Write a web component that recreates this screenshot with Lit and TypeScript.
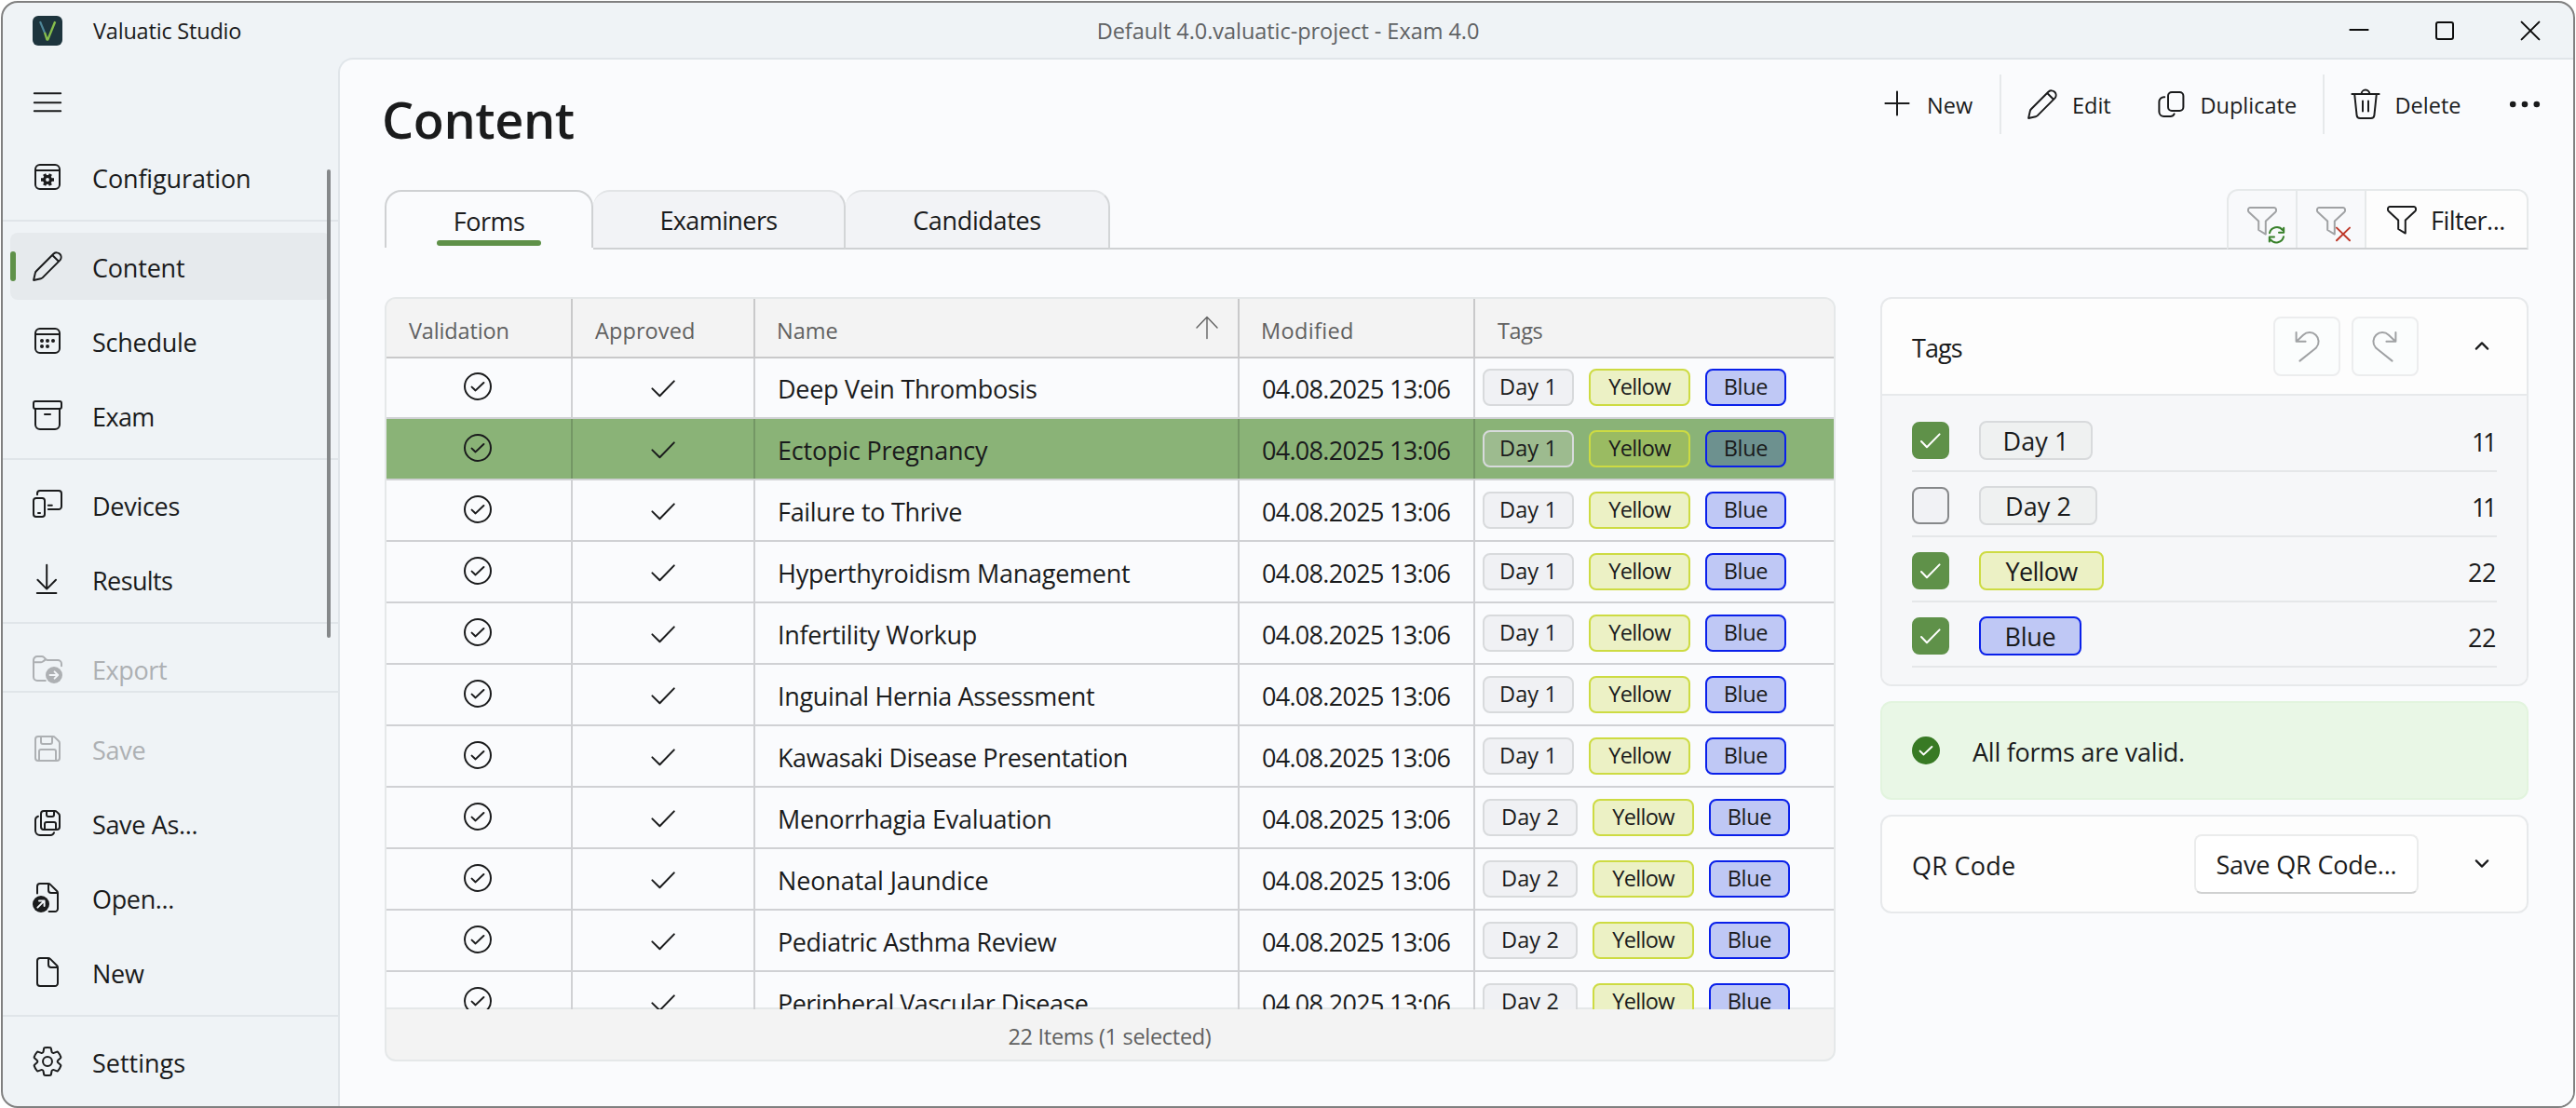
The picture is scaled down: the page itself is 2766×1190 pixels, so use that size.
import { LitElement, html, css, svg, nothing, TemplateResult, SVGTemplateResult } from "lit";
import { customElement, property } from "lit/decorators.js";
import { classMap } from "lit/directives/class-map.js";
import { styleMap } from "lit/directives/style-map.js";

/* Icons are drawn on a 20-unit grid, 2px per unit. */
const icons: Record<string, SVGTemplateResult> = {
  menu: svg`<path d="M2.9 5.15h14.2M2.9 10.1h14.2M2.9 14.6h14.2"/>`,
  configuration: svg`<rect x="3.5" y="3.5" width="13" height="13" rx="2.4"/><path d="M3.5 6.5h13"/>
    <circle cx="10" cy="11.5" r="1.75" stroke-width="1.6"/>
    <path d="M12.2 11.5h1.3M7.8 11.5H6.5M11.1 13.4l.6 1.1M8.9 13.4l-.6 1.1M11.1 9.6l.6-1.1M8.9 9.6l-.6-1.1" stroke-width="1.7" stroke-linecap="butt"/>`,
  pencil: svg`<path d="M13.3 3.25a2.45 2.45 0 0 1 3.45 3.45L7.4 16.05c-.27.27-.6.45-.97.53L2.55 17.45l.87-3.88c.08-.37.26-.7.53-.97ZM12.6 4l3.4 3.4"/>`,
  schedule: svg`<rect x="3.5" y="3.5" width="13" height="13" rx="2.4"/><path d="M3.5 6.5h13"/>
    <g class="solid"><circle cx="7" cy="10" r="1"/><circle cx="10" cy="10" r="1"/><circle cx="13" cy="10" r="1"/><circle cx="7" cy="13" r="1"/><circle cx="10" cy="13" r="1"/></g>`,
  exam: svg`<rect x="2.5" y="2.5" width="15" height="4" rx="1"/><path d="M3.5 6.5v8.5a2.5 2.5 0 0 0 2.5 2.5h8a2.5 2.5 0 0 0 2.5-2.5V6.5M8.5 9.5h3"/>`,
  devices: svg`<path d="M4.5 4.6V4A1.5 1.5 0 0 1 6 2.5h10A1.5 1.5 0 0 1 17.5 4v7a1.5 1.5 0 0 1-1.5 1.5h-5.6M10.4 10.4h2"/>
    <rect x="2.5" y="6.5" width="6" height="10" rx="1.4"/><path d="M5 14.5h1"/>`,
  download: svg`<path d="M9.6 2.4v12.8M4.7 10.4l4.9 4.9 4.9-4.9M4.4 17.5h10.3"/>`,
  export: svg`<path d="M2.5 6.6h4.1c.4 0 .75-.15 1-.4l1-.75M8.9 16.5H4.5a2 2 0 0 1-2-2v-9a2 2 0 0 1 2-2h2.4c.45 0 .85.15 1.15.45l1 1.05c.3.3.6.5 1 .5h5.45a2 2 0 0 1 2 2v1.1"/>
    <circle class="solid" cx="13.5" cy="13.5" r="4.5"/><path class="knock" d="M11.3 13.5h4.2M13.8 11.7l1.8 1.8-1.8 1.8"/>`,
  save: svg`<path d="M5 3.5h7.9c.4 0 .8.16 1.06.44l2.1 2.1c.28.28.44.66.44 1.06V15a1.5 1.5 0 0 1-1.5 1.5H5A1.5 1.5 0 0 1 3.5 15V5A1.5 1.5 0 0 1 5 3.5ZM6.5 3.5v3a1 1 0 0 0 1 1h4a1 1 0 0 0 1-1v-3M5.5 16.5v-5a1 1 0 0 1 1-1h7a1 1 0 0 1 1 1v5"/>`,
  saveAs: svg`<path d="M8 3.5h5.9c.4 0 .78.16 1.06.44l1.1 1.1c.28.28.44.66.44 1.06V12a1.5 1.5 0 0 1-1.5 1.5H8A1.5 1.5 0 0 1 6.5 12V5A1.5 1.5 0 0 1 8 3.5ZM9.5 3.5v2a1 1 0 0 0 1 1h2a1 1 0 0 0 1-1v-2M8.5 13.5v-3a1 1 0 0 1 1-1h4a1 1 0 0 1 1 1v3M5 6.4a2 2 0 0 0-1.5 1.9V14A2.5 2.5 0 0 0 6 16.5h5.6a2 2 0 0 0 1.9-1.4"/>`,
  open: svg`<path d="M4.5 7.8V4A1.5 1.5 0 0 1 6 2.5h4.4c.4 0 .78.16 1.06.44l3.6 3.6c.28.28.44.66.44 1.06V16a1.5 1.5 0 0 1-1.5 1.5h-3.2M10.5 2.7V6A1.5 1.5 0 0 0 12 7.5h3.3"/>
    <circle class="solid" cx="6.5" cy="13.5" r="4.5"/><path class="knock" d="M4.7 15.3l3.5-3.5M5.5 11.7h2.8v2.8"/>`,
  file: svg`<path d="M6 2.5h4.4c.4 0 .78.16 1.06.44l3.6 3.6c.28.28.44.66.44 1.06V16a1.5 1.5 0 0 1-1.5 1.5H6A1.5 1.5 0 0 1 4.5 16V4A1.5 1.5 0 0 1 6 2.5ZM10.5 2.7V6A1.5 1.5 0 0 0 12 7.5h3.3"/>`,
  settings: svg`<g transform="translate(10 10) scale(.885) translate(-10 -10)" stroke-width="1.13"><path d="M1.91 7.38A8.5 8.5 0 0 1 3.7 4.3a.5.5 0 0 1 .54-.13l1.92.68a1 1 0 0 0 1.32-.76l.36-2a.5.5 0 0 1 .4-.4 8.53 8.53 0 0 1 3.55 0c.2.04.35.2.38.4l.37 2a1 1 0 0 0 1.32.76l1.92-.68a.5.5 0 0 1 .54.13 8.5 8.5 0 0 1 1.78 3.08c.06.2 0 .4-.15.54l-1.56 1.32a1 1 0 0 0 0 1.52l1.56 1.32a.5.5 0 0 1 .15.54 8.5 8.5 0 0 1-1.78 3.08.5.5 0 0 1-.54.13l-1.92-.68a1 1 0 0 0-1.32.76l-.37 2a.5.5 0 0 1-.38.4 8.53 8.53 0 0 1-3.56 0 .5.5 0 0 1-.39-.4l-.36-2a1 1 0 0 0-1.32-.76l-1.92.68a.5.5 0 0 1-.54-.13 8.5 8.5 0 0 1-1.78-3.08.5.5 0 0 1 .15-.54l1.56-1.32a1 1 0 0 0 0-1.52L2.06 7.92a.5.5 0 0 1-.15-.54Z"/><circle cx="10" cy="10" r="2.8"/></g>`,
  plus: svg`<path d="M10 3.2v12.6M3.7 9.5h12.6"/>`,
  duplicate: svg`<rect x="8.5" y="3.5" width="8.2" height="10" rx="2"/><path d="M6.6 6.1A2.6 2.6 0 0 0 3.7 8.6V14a2.5 2.5 0 0 0 2.5 2.5h3.5a2.3 2.3 0 0 0 2.1-1.3"/>`,
  trash: svg`<path d="M2.7 4.5h14.6M7.8 4.5a2.2 2.2 0 0 1 4.4 0M4.1 4.5l1.2 11.4a1.8 1.8 0 0 0 1.8 1.6h5.8a1.8 1.8 0 0 0 1.8-1.6l1.2-11.4M8.5 8.3v5.5M11.5 8.3v5.5"/>`,
  more: svg`<g class="solid"><circle cx="3.6" cy="10" r="1.65"/><circle cx="10" cy="10" r="1.65"/><circle cx="16.4" cy="10" r="1.65"/></g>`,
  funnel: svg`<path d="M3.6 3h12.8a1.1 1.1 0 0 1 1.1 1.1v.5c0 .3-.1.6-.35.8L11.9 10.3v7L8.1 15v-4.7L2.85 5.4c-.25-.2-.35-.5-.35-.8v-.5A1.1 1.1 0 0 1 3.6 3Z"/>`,
  undo: svg`<path d="M4.3 2.5v4.9h5M4.5 7.2l3.6-3.3a4.85 4.85 0 0 1 7 6.7c-.3.3-.6.6-1 .9L6.2 17.8"/>`,
  redo: svg`<path d="M15.7 2.5v4.9h-5M15.5 7.2l-3.6-3.3a4.85 4.85 0 0 0-7 6.7c.3.3.6.6 1 .9l7.9 6.3"/>`,
  up: svg`<path d="M6.9 11.3L10 8.2l3.1 3.1" stroke-width="1.1"/>`,
  down: svg`<path d="M6.9 8.2L10 11.3l3.1-3.1" stroke-width="1.1"/>`,
  circleCheck: svg`<circle cx="10" cy="10" r="7"/><path d="M6.8 10.3l2 1.9 4.4-4.2"/>`,
  check: svg`<path d="M4.2 10.2l4 3.9 7.7-7.9"/>`,
  boxCheck: svg`<path d="M5 10.5l3 3.1 6.8-6.9" />`,
  sort: svg`<path d="M10 4.4v11.4M4.5 10L10 4.3 15.5 10" stroke-width=".7"/>`,
  minimise: svg`<path d="M5.2 9.5h9.6"/>`,
  maximise: svg`<rect x="5.5" y="5.5" width="9" height="9" rx="1"/>`,
  close: svg`<path d="M5.3 5.3l9.4 9.4M14.7 5.3l-9.4 9.4"/>`,
};

const iconStyles = css`
  .icon { width: 40px; height: 40px; flex: none; display: block; overflow: visible; fill: none; stroke: currentColor; stroke-width: 1; stroke-linecap: round; stroke-linejoin: round; }
  .icon .solid { fill: currentColor; stroke: none; }
  .icon .knock { stroke: #f2f5f8; stroke-width: 1; }
`;

const icon = (name: string, extra: SVGTemplateResult | typeof nothing = nothing) =>
  html`<svg class="icon" viewBox="0 0 20 20">${icons[name]}${extra}</svg>`;

/* Text with its own tracking, in px. */
const tracked = (text: string, tracking: number): TemplateResult =>
  html`<span style=${styleMap({ letterSpacing: `${tracking}px` })}>${text}</span>`;

interface NavItem { label: string; icon: string; tracking: number; selected?: boolean; disabled?: boolean; }

const navGroups: NavItem[][] = [
  [{ label: "Configuration", icon: "configuration", tracking: -0.13 }],
  [
    { label: "Content", icon: "pencil", tracking: -0.2, selected: true },
    { label: "Schedule", icon: "schedule", tracking: -0.25 },
    { label: "Exam", icon: "exam", tracking: -0.6 },
  ],
  [
    { label: "Devices", icon: "devices", tracking: -0.28 },
    { label: "Results", icon: "download", tracking: -0.6 },
  ],
  [{ label: "Export", icon: "export", tracking: -0.4, disabled: true }],
];

const footerGroups: NavItem[][] = [
  [
    { label: "Save", icon: "save", tracking: -0.3, disabled: true },
    { label: "Save As...", icon: "saveAs", tracking: -0.35 },
    { label: "Open...", icon: "open", tracking: -0.35 },
    { label: "New", icon: "file", tracking: -0.3 },
  ],
  [{ label: "Settings", icon: "settings", tracking: 0 }],
];

@customElement("app-nav")
export class AppNav extends LitElement {
  static styles = [iconStyles, css`
    :host { display: flex; flex-direction: column; width: 360px; flex: none; position: relative; }
    .menu { height: 88px; box-sizing: border-box; padding: 8px 0 0 28px; display: flex; align-items: center; }
    .scroller { height: 592px; overflow: hidden; flex: none; }
    .group + .group { border-top: 2px solid #e0e5e9; margin-top: 6px; padding-top: 8px; }
    .cell { height: 80px; box-sizing: border-box; padding: 4px 8px; }
    .item { height: 72px; display: flex; align-items: center; gap: 28px; padding-left: 20px; border-radius: 8px; position: relative; }
    .item.selected { background: #e6eaed; }
    .item.selected::before { content: ""; position: absolute; left: 0; top: 20px; width: 6px; height: 32px; border-radius: 3px; background: #5f9149; }
    .item.disabled { color: #adb0b3; }
    .label { padding-top: 4px; white-space: nowrap; }
    .footer { border-top: 2px solid #e0e5e9; padding-top: 20px; }
    .thumb { position: absolute; left: 348px; top: 120px; width: 4px; height: 503px; border-radius: 2px; background: #85888a; }
  `];
  private cells(group: NavItem[]) {
    return html`<div class="group">${group.map((n) => html`<div class="cell">
      <div class=${classMap({ item: true, selected: !!n.selected, disabled: !!n.disabled })}>
        ${icon(n.icon)}<div class="label">${tracked(n.label, n.tracking)}</div>
      </div></div>`)}</div>`;
  }
  render() {
    return html`
      <div class="menu">${icon("menu")}</div>
      <div class="scroller">${navGroups.map((g) => this.cells(g))}</div>
      <div class="footer">${footerGroups.map((g) => this.cells(g))}</div>
      <div class="thumb"></div>`;
  }
}

type TagName = "Day 1" | "Day 2" | "Yellow" | "Blue";
const tagInfo: Record<TagName, { tone: string; small: number; large: number; tracking: number }> = {
  "Day 1": { tone: "day", small: 98, large: 122, tracking: 0.1 },
  "Day 2": { tone: "day", small: 102, large: 127, tracking: 0.1 },
  Yellow: { tone: "yellow", small: 109, large: 134, tracking: -0.7 },
  Blue: { tone: "blue", small: 87, large: 110, tracking: -0.3 },
};

@customElement("tag-chip")
export class TagChip extends LitElement {
  @property() name: TagName = "Day 1";
  @property({ type: Boolean }) large = false;
  @property({ type: Boolean }) selected = false;
  static styles = css`
    :host { display: block; flex: none; }
    .tag { box-sizing: border-box; height: 40px; border: 2px solid; border-radius: 8px; font-size: 23.5px; line-height: 34px; text-align: center; white-space: nowrap; }
    .tag.large { height: 42px; font-size: 27px; line-height: 40px; }
    .day { border-color: #d8dadc; background: #f0f1f4; }
    .large.day { background: #eff1f1; }
    .yellow { border-color: #cddb42; background: #ecf1c5; }
    .blue { border-color: #0a20ea; background: #bfc8f5; }
    .selected.day { background: #9dbb8f; }
    .selected.yellow { background: #9abb62; }
    .selected.blue { background: #6d918f; }
  `;
  render() {
    const info = tagInfo[this.name];
    return html`<div class=${classMap({ tag: true, [info.tone]: true, large: this.large, selected: this.selected })}
      style=${styleMap({ width: `${this.large ? info.large : info.small}px` })}>${tracked(this.name, info.tracking)}</div>`;
  }
}

interface Form { name: string; tracking: number; day: TagName; selected?: boolean; }
const forms: Form[] = [
  { name: "Deep Vein Thrombosis", tracking: -0.27, day: "Day 1" },
  { name: "Ectopic Pregnancy", tracking: -0.2, day: "Day 1", selected: true },
  { name: "Failure to Thrive", tracking: -0.3, day: "Day 1" },
  { name: "Hyperthyroidism Management", tracking: -0.26, day: "Day 1" },
  { name: "Infertility Workup", tracking: -0.28, day: "Day 1" },
  { name: "Inguinal Hernia Assessment", tracking: -0.34, day: "Day 1" },
  { name: "Kawasaki Disease Presentation", tracking: -0.44, day: "Day 1" },
  { name: "Menorrhagia Evaluation", tracking: -0.28, day: "Day 2" },
  { name: "Neonatal Jaundice", tracking: -0.12, day: "Day 2" },
  { name: "Pediatric Asthma Review", tracking: -0.4, day: "Day 2" },
  { name: "Peripheral Vascular Disease", tracking: -0.55, day: "Day 2" },
];

@customElement("forms-table")
export class FormsTable extends LitElement {
  static styles = [iconStyles, css`
    :host { display: flex; flex-direction: column; box-sizing: border-box; width: 1558px; height: 821px; flex: none; border: 2px solid #e5e8e9; border-radius: 12px; overflow: hidden; background: #f3f3f3; }
    .row { display: grid; grid-template-columns: 200px 196px 520px 253px 1fr; box-sizing: border-box; height: 66px; border-bottom: 2px solid #d0d1d4; }
    .cell { box-sizing: border-box; border-right: 2px solid #d0d1d4; display: flex; align-items: center; white-space: nowrap; }
    .cell:last-child { border-right: 0; }
    .head { height: 64px; border-bottom-color: #c9c9ca; font-size: 23.5px; color: #616161; background: #f3f3f3; flex: none; }
    .head .cell { border-right-color: #c9c9ca; padding: 5px 0 0 24px; }
    .head .cell.inset { padding-left: 23px; }
    .sort { margin-left: auto; margin-right: 13px; margin-top: -5px; }
    .body { height: 699px; overflow: hidden; flex: none; background: linear-gradient(#e5e8e9, #e5e8e9) bottom / 100% 2px no-repeat, #fafbfd; }
    .rows { margin-top: -1px; }
    .center { justify-content: center; }
    .valid { padding: 0 2px 2px 0; }
    .approved { padding: 2px 0 0 0; }
    .text { padding: 5px 0 0 24px; }
    .tags { gap: 16px; padding-left: 8px; }
    .selected { background: #8ab377; }
    .selected .cell { border-right-color: #749765; }
    .status { flex: 1; display: flex; align-items: center; justify-content: center; padding: 3px 1px 0 0; font-size: 23.5px; color: #616161; }
  `];
  render() {
    return html`
      <div class="row head">
        <div class="cell">${tracked("Validation", -0.15)}</div>
        <div class="cell">${tracked("Approved", 0.1)}</div>
        <div class="cell inset">${tracked("Name", 0)}<div class="sort">${icon("sort")}</div></div>
        <div class="cell inset">${tracked("Modified", 0.35)}</div>
        <div class="cell">${tracked("Tags", -0.4)}</div>
      </div>
      <div class="body"><div class="rows">${forms.map((f) => html`
        <div class=${classMap({ row: true, selected: !!f.selected })}>
          <div class="cell center valid">${icon("circleCheck")}</div>
          <div class="cell center approved">${icon("check")}</div>
          <div class="cell text">${tracked(f.name, f.tracking)}</div>
          <div class="cell text">${tracked("04.08.2025 13:06", -0.7)}</div>
          <div class="cell tags">${([f.day, "Yellow", "Blue"] as TagName[]).map((t) =>
            html`<tag-chip name=${t} ?selected=${!!f.selected}></tag-chip>`)}</div>
        </div>`)}</div></div>
      <div class="status">${tracked("22 Items (1 selected)", -0.3)}</div>`;
  }
}

@customElement("side-cards")
export class SideCards extends LitElement {
  static styles = [iconStyles, css`
    :host { display: flex; flex-direction: column; gap: 16px; width: 696px; flex: none; }
    .card { box-sizing: border-box; border: 2px solid #e7e9eb; border-radius: 12px; background: #fdfdfd; overflow: hidden; }
    .head { height: 102px; display: flex; align-items: center; padding: 0 16px 0 32px; }
    .title { flex: 1; padding-top: 5px; }
    .tool { box-sizing: border-box; width: 72px; height: 64px; margin-left: 12px; border: 2px solid #ecedee; border-radius: 8px; background: #fbfdfd; color: #a0a2a4; display: flex; align-items: center; justify-content: center; }
    .toggle { width: 64px; margin-left: 36px; display: flex; justify-content: center; }
    .save { box-sizing: border-box; width: 241px; height: 64px; padding-top: 2px; border: 2px solid #ebecec; border-bottom-color: #d0d1d1; border-radius: 8px; background: #fff; display: flex; align-items: center; justify-content: center; white-space: nowrap; }
    .list { border-top: 2px solid #e7e9eb; background: #f6f7f9; padding: 12px 32px 18px; }
    .entry { box-sizing: border-box; height: 70px; border-bottom: 2px solid #e5e7e9; display: flex; align-items: center; padding-top: 4px; }
    .box { box-sizing: border-box; width: 40px; height: 40px; border-radius: 8px; border: 2px solid #86888a; background: #f1f2f5; margin-right: 32px; display: flex; align-items: center; justify-content: center; color: #fff; }
    .box.on { border-color: #5f9149; background: #5f9149; }
    .count { margin-left: auto; padding: 4px 1px 0 0; }
    .count.narrow { padding-right: 3px; }
    .notice { height: 106px; display: flex; align-items: center; padding-left: 32px; background: #e9f7e6; border-color: #e2f4de; }
    .badge { width: 30px; height: 30px; border-radius: 50%; background: #387a24; color: #fff; display: flex; align-items: center; justify-content: center; margin-right: 35px; }
    .message { padding-top: 4px; }
  `];
  private entry(name: TagName, count: string, on: boolean) {
    const narrow = count === "11";
    return html`<div class="entry">
      <div class=${classMap({ box: true, on })}>${on ? icon("boxCheck") : nothing}</div>
      <tag-chip name=${name} large></tag-chip>
      <div class=${classMap({ count: true, narrow })}>${tracked(count, narrow ? -3.4 : -0.4)}</div></div>`;
  }
  render() {
    return html`
      <div class="card">
        <div class="head"><div class="title">${tracked("Tags", -0.9)}</div>
          <div class="tool">${icon("undo")}</div><div class="tool">${icon("redo")}</div>
          <div class="toggle">${icon("up")}</div></div>
        <div class="list">
          ${this.entry("Day 1", "11", true)}${this.entry("Day 2", "11", false)}
          ${this.entry("Yellow", "22", true)}${this.entry("Blue", "22", true)}
        </div>
      </div>
      <div class="card notice"><div class="badge"><svg class="icon" viewBox="0 0 20 20"><path d="M6.8 10.3l2 1.9 4.4-4.2"/></svg></div>
        <div class="message">${tracked("All forms are valid.", -0.25)}</div></div>
      <div class="card"><div class="head"><div class="title">${tracked("QR Code", 0.25)}</div>
        <div class="save">${tracked("Save QR Code...", -0.15)}</div>
        <div class="toggle">${icon("down")}</div></div></div>`;
  }
}

@customElement("app-root")
export class AppRoot extends LitElement {
  static styles = [iconStyles, css`
    :host { display: block; box-sizing: border-box; width: 2766px; height: 1190px; padding: 1px 1px 0; background: #fff; overflow: hidden;
      font-family: "Open Sans", "Noto Sans", sans-serif; font-size: 27px; line-height: 1.362; color: #1a1b1c; }
    .window { box-sizing: border-box; width: 2764px; height: 1189px; border: 2px solid #808080; border-radius: 18px; background: #eff3f6; overflow: hidden; display: flex; flex-direction: column; }
    .titlebar { height: 59px; flex: none; display: grid; grid-template-columns: 1fr auto 1fr; align-items: center; font-size: 23.5px; }
    .brand { display: flex; align-items: center; padding-left: 32px; gap: 33px; }
    .logo { width: 32px; height: 32px; display: block; }
    .doc { color: #5f6264; letter-spacing: -0.05px; }
    .controls { display: flex; justify-content: flex-end; color: #0c0c0c; }
    .control { width: 92px; display: flex; justify-content: center; }
    .main { flex: 1; display: flex; min-height: 0; }
    .panel { box-sizing: border-box; flex: 1; border: solid #e0e5e9; border-width: 2px 0 0 2px; border-top-left-radius: 16px; background: #fafbfd; padding-left: 48px; }
    .header { height: 140px; display: flex; justify-content: space-between; align-items: flex-start; }
    h1 { margin: 0 0 0 -3px; font-size: 54px; font-weight: 600; line-height: 129px; letter-spacing: -0.4px; }
    .toolbar { height: 64px; margin: 16px 8px 0 0; display: grid; grid-template-columns: 126px 2px 137.5px 207px 2px 171.5px 88px; font-size: 23.5px; }
    .rule { background: #e6e9eb; }
    .tool { display: flex; align-items: center; gap: 12px; padding-left: 24px; white-space: nowrap; }
    .tool span { padding-top: 2px; }
    .tool.first { padding-left: 0; margin-left: -4px; }
    .tabs { height: 64px; display: flex; margin-right: 48px; }
    .tab { box-sizing: border-box; height: 64px; padding-top: 2px; border: 2px solid #e2e4e6; border-left-width: 0; border-right-color: #d3d5d7; border-bottom-color: #cfd1d3; border-radius: 18px 18px 0 0; background: #f2f3f6; display: flex; align-items: center; justify-content: center; }
    .tab.active { width: 224px; height: 62px; padding-top: 4px; border-color: #cfd1d3; border-left-width: 2px; border-bottom: 0; background: none; position: relative; }
    .tab.active::after { content: ""; position: absolute; left: 54px; top: 52px; width: 112px; height: 6px; border-radius: 3px; background: #5f9149; }
    .examiners { width: 271px; }
    .candidates { width: 284px; }
    .gap { flex: 1; border-bottom: 2px solid #cfd1d3; }
    .filters { box-sizing: border-box; width: 324px; height: 65px; margin-top: -1px; border: 2px solid #e6e9ea; border-bottom-color: #cfd1d3; border-radius: 12px 12px 0 0; background: #f8f9fb; display: grid; grid-template-columns: 74px 74px 1fr; overflow: hidden; }
    .filter { display: flex; align-items: center; justify-content: center; border-right: 2px solid #e6e9ea; color: #a0a2a4; padding-top: 3px; }
    .filter.all { border-right: 0; background: #fdfdfd; color: inherit; justify-content: flex-start; gap: 11px; padding: 1px 0 0 18px; }
    .filter.all span { padding-top: 2px; }
    .refresh { stroke: #38802a; }
    .clear { stroke: #bf3a2b; }
    .content { display: flex; gap: 48px; margin-top: 51px; }
  `];
  render() {
    const refresh = svg`<path class="refresh" d="M14 16.6a4 4 0 0 1 7-1.6M21.6 13.9v2.5h-2.6M21.5 18.6a4 4 0 0 1-7 1.6M13.9 21.2v-2.5h2.6"/>`;
    const clear = svg`<path class="clear" d="M13 13.8l7 6.8M20 13.8l-7 6.8"/>`;
    return html`<div class="window">
      <div class="titlebar">
        <div class="brand">
          <svg class="logo" viewBox="0 0 32 32"><rect width="32" height="32" rx="6" fill="#1d343d"/>
            <path d="M8 6.2l5.2 12.5" fill="none" stroke="#4f8799" stroke-width="2.2"/>
            <path d="M24.2 6.2L16.3 25.6h-.8L13 18" fill="none" stroke="#86bd4c" stroke-width="2.4" stroke-linejoin="round"/></svg>
          ${tracked("Valuatic Studio", -0.2)}
        </div>
        <div class="doc">Default 4.0.valuatic-project - Exam 4.0</div>
        <div class="controls">
          <div class="control">${icon("minimise")}</div><div class="control">${icon("maximise")}</div><div class="control">${icon("close")}</div>
        </div>
      </div>
      <div class="main">
        <app-nav></app-nav>
        <div class="panel">
          <div class="header">
            <h1>Content</h1>
            <div class="toolbar">
              <div class="tool first">${icon("plus")}<span>New</span></div><div class="rule"></div>
              <div class="tool">${icon("pencil")}<span>Edit</span></div>
              <div class="tool">${icon("duplicate")}<span>Duplicate</span></div><div class="rule"></div>
              <div class="tool">${icon("trash")}<span>Delete</span></div>
              <div class="tool">${icon("more")}</div>
            </div>
          </div>
          <div class="tabs">
            <div class="tab active">${tracked("Forms", -0.5)}</div>
            <div class="tab examiners">${tracked("Examiners", -0.6)}</div>
            <div class="tab candidates">${tracked("Candidates", -0.35)}</div>
            <div class="gap"></div>
            <div class="filters">
              <div class="filter">${icon("funnel", refresh)}</div>
              <div class="filter">${icon("funnel", clear)}</div>
              <div class="filter all">${icon("funnel")}${tracked("Filter...", -0.55)}</div>
            </div>
          </div>
          <div class="content"><forms-table></forms-table><side-cards></side-cards></div>
        </div>
      </div>
    </div>`;
  }
}
